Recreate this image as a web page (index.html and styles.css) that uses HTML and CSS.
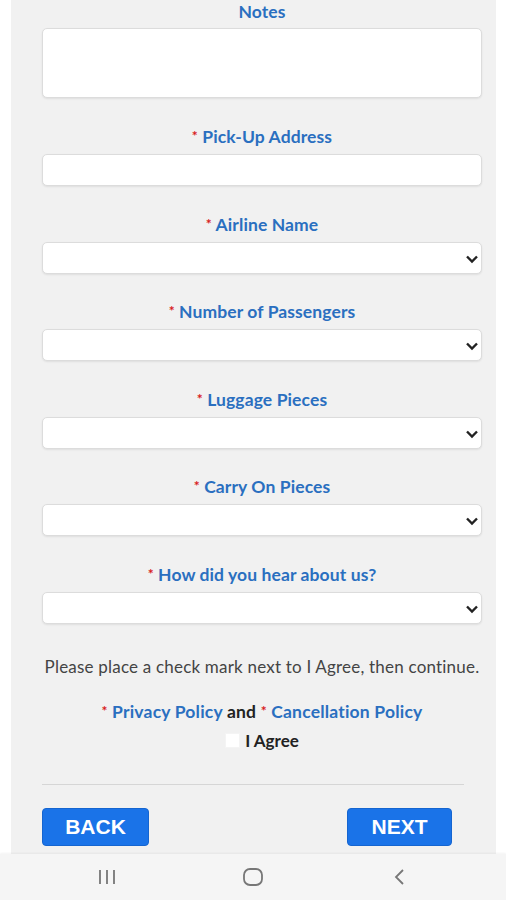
FILE: index.html
```html
<!DOCTYPE html>
<html lang="en">
<head>
  <meta charset="UTF-8" />
  <meta name="viewport" content="width=device-width, initial-scale=1.0"/>
  <title>Reservation - Trip Details</title>
  <link rel="stylesheet" href="styles.css">
</head>
<body>

  <div class="panel">
    <form class="form">
      <div class="field first">
        <label>Notes</label>
        <textarea class="box notes"></textarea>
      </div>

      <div class="field">
        <label><span class="req">*</span> Pick-Up Address</label>
        <input class="box" type="text">
      </div>

      <div class="field">
        <label><span class="req">*</span> Airline Name</label>
        <div class="select-wrap">
          <select class="box"><option></option></select>
          <svg class="chev" width="14" height="10" viewBox="0 0 14 10"><path d="M2 2.5 L7 7.5 L12 2.5" fill="none" stroke="#222" stroke-width="2.4"/></svg>
        </div>
      </div>

      <div class="field">
        <label><span class="req">*</span> Number of Passengers</label>
        <div class="select-wrap">
          <select class="box"><option></option></select>
          <svg class="chev" width="14" height="10" viewBox="0 0 14 10"><path d="M2 2.5 L7 7.5 L12 2.5" fill="none" stroke="#222" stroke-width="2.4"/></svg>
        </div>
      </div>

      <div class="field">
        <label><span class="req">*</span> Luggage Pieces</label>
        <div class="select-wrap">
          <select class="box"><option></option></select>
          <svg class="chev" width="14" height="10" viewBox="0 0 14 10"><path d="M2 2.5 L7 7.5 L12 2.5" fill="none" stroke="#222" stroke-width="2.4"/></svg>
        </div>
      </div>

      <div class="field">
        <label><span class="req">*</span> Carry On Pieces</label>
        <div class="select-wrap">
          <select class="box"><option></option></select>
          <svg class="chev" width="14" height="10" viewBox="0 0 14 10"><path d="M2 2.5 L7 7.5 L12 2.5" fill="none" stroke="#222" stroke-width="2.4"/></svg>
        </div>
      </div>

      <div class="field">
        <label><span class="req">*</span> How did you hear about us?</label>
        <div class="select-wrap">
          <select class="box"><option></option></select>
          <svg class="chev" width="14" height="10" viewBox="0 0 14 10"><path d="M2 2.5 L7 7.5 L12 2.5" fill="none" stroke="#222" stroke-width="2.4"/></svg>
        </div>
      </div>

      <p class="note">Please place a check mark next to I Agree, then continue.</p>

      <p class="policies">
        <span class="req">*</span> <a href="#">Privacy Policy</a> and <span class="req">*</span> <a href="#">Cancellation Policy</a>
      </p>

      <label class="agree"><span class="check"></span>I Agree</label>

      <hr class="divider">

      <div class="buttons">
        <button type="button" class="btn">BACK</button>
        <button type="button" class="btn next">NEXT</button>
      </div>
    </form>
  </div>

  <!-- barra de navegación del teléfono -->
  <div class="navbar">
    <svg width="18" height="16" viewBox="0 0 18 16"><path d="M2 1 V15 M9 1 V15 M16 1 V15" stroke="#777" stroke-width="1.8"/></svg>
    <svg width="22" height="20" viewBox="0 0 22 20"><rect x="2" y="2" width="18" height="16" rx="6" fill="none" stroke="#777" stroke-width="1.8"/></svg>
    <svg width="12" height="18" viewBox="0 0 12 18"><path d="M10 2 L3 9 L10 16" fill="none" stroke="#777" stroke-width="1.8"/></svg>
  </div>

</body>
</html>
```

FILE: styles.css
```css
body {
  margin: 0;
  background: #ffffff;
  font-family: Lato, 'Open Sans', sans-serif;
}

.panel {
  margin: 0 10px 0 11px;
  background-color: #f1f1f1;
  padding: 2px 14px 8px 31px;
}

.form {
  width: 440px;
}

.field {
  display: flex;
  flex-direction: column;
  margin-top: 28.5px;
}

.field.first {
  margin-top: 0;
}

.field.first label {
  margin-bottom: 6px;
}

.field:nth-child(2) {
  margin-top: 29px;
}

.field label {
  text-align: center;
  font-size: 17.5px;
  letter-spacing: 0.1px;
  height: 20px;
  line-height: 20px;
  font-weight: bold;
  color: #2a6fc0;
  margin-bottom: 7px;
}

.req {
  color: #d81b1b;
  font-size: 14px;
  position: relative;
  top: -2px;
}

.box {
  box-sizing: border-box;
  width: 440px;
  height: 32px;
  background: #ffffff;
  border: 1px solid #dcdcdc;
  border-radius: 5px;
  box-shadow: 0 1px 2px rgba(0,0,0,0.08);
  font-family: inherit;
  font-size: 15px;
  margin: 0;
}

.notes {
  display: block;
  height: 70px;
  resize: none;
}

.select-wrap {
  position: relative;
  height: 32px;
}

.select-wrap select {
  appearance: none;
  -webkit-appearance: none;
  display: block;
}

.chev {
  position: absolute;
  right: 3px;
  top: 12px;
  pointer-events: none;
}

.note {
  margin: 33px 0 0 0;
  text-align: center;
  font-size: 17px;
  letter-spacing: 0.2px;
  height: 20px;
  line-height: 20px;
  color: #444444;
}

.policies {
  margin: 25px 0 0 0;
  text-align: center;
  font-size: 17.5px;
  letter-spacing: 0.2px;
  height: 20px;
  line-height: 20px;
  font-weight: bold;
  color: #222222;
}

.policies a {
  color: #2a6fc0;
  text-decoration: none;
}

.agree {
  display: flex;
  justify-content: center;
  align-items: center;
  gap: 5px;
  margin-top: 9px;
  height: 20px;
  font-size: 17px;
  line-height: 20px;
  font-weight: bold;
  color: #222222;
}

.check {
  display: inline-block;
  width: 13px;
  height: 13px;
  background: #ffffff;
  border: 1px solid #f4f4f4;
}

.divider {
  width: 422px;
  margin: 33px 0 0 0;
  border: none;
  border-top: 1px solid #d6d6d6;
}

.buttons {
  display: flex;
  justify-content: space-between;
  margin-top: 23px;
  padding-right: 30px;
}

.btn {
  width: 107px;
  height: 38px;
  background-color: #1a73e8;
  color: #ffffff;
  border: 1px solid #1565d0;
  border-radius: 4px;
  font-family: 'Liberation Sans', Arial, sans-serif;
  font-size: 21px;
  font-weight: bold;
  padding: 0;
}

.btn.next {
  width: 105px;
}

.navbar {
  height: 47px;
  background: #f5f5f5;
  box-shadow: 0 -1px 2px rgba(0,0,0,0.05);
  display: grid;
  grid-template-columns: repeat(3, 146px);
  justify-items: center;
  align-items: center;
  padding-left: 34px;
}
```
